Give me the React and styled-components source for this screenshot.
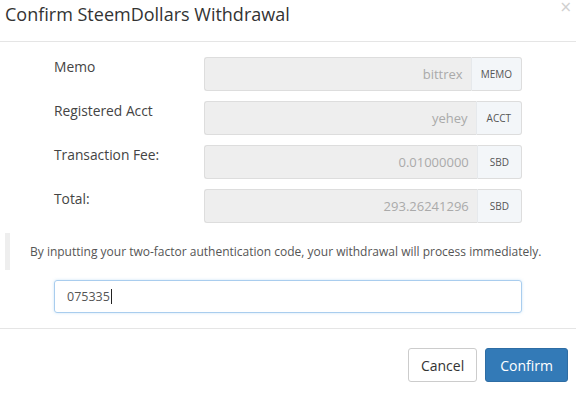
import React from "react";
import styled, { createGlobalStyle } from "styled-components";

const Global = createGlobalStyle`
  html, body { margin: 0; padding: 0; background: #fff; }
  body { font-family: "Open Sans", "Liberation Sans", sans-serif; color: #444; }
  * { box-sizing: border-box; }
`;

const Modal = styled.div`
  width: 576px;
  height: 393px;
  display: flex;
  flex-direction: column;
  overflow: hidden;
`;

const Header = styled.div`
  height: 42px;
  border-bottom: 1px solid #e5e5e5;
  display: flex;
  align-items: flex-start;
  justify-content: space-between;
  padding: 0 4px 0 5px;
`;

const Title = styled.h4`
  margin: 0;
  margin-top: 1px;
  font-size: 18px;
  font-weight: 400;
  color: #333;
  line-height: 26px;
`;

const Close = styled.span`
  font-size: 15px;
  line-height: 14px;
  color: #d0d0d0;
  font-family: "DejaVu Sans", sans-serif;
`;

const Body = styled.div`
  padding: 15px 0 15px 0;
  display: flex;
  flex-direction: column;
  border-bottom: 1px solid #e5e5e5;
`;

const Rows = styled.div`
  display: flex;
  flex-direction: column;
  gap: 10px;
  padding-left: 54px;
`;

const Row = styled.div`
  display: flex;
  align-items: flex-start;
`;

const Label = styled.label`
  width: 150px;
  font-size: 13.8px;
  line-height: 18px;
  padding-top: 1px;
  color: #444;
`;

const Group = styled.div`
  display: flex;
  width: 318px;
  height: 34px;
`;

const Field = styled.div`
  flex: 1;
  background: #eee;
  border: 1px solid #ddd;
  border-right: none;
  border-radius: 3px 0 0 3px;
  font-size: 13px;
  color: #aaa;
  display: flex;
  align-items: center;
  justify-content: flex-end;
  padding: 0 8px;
`;

const Addon = styled.span`
  background: #f3f6f9;
  border: 1px solid #ddd;
  border-left: 1px solid #e6e9ec;
  border-radius: 0 3px 3px 0;
  font-size: 10px;
  color: #555;
  display: flex;
  align-items: center;
  padding: 0 ${(p) => p.$pad}px;
`;

const Quote = styled.blockquote`
  margin: 10px 0 0 5px;
  border-left: 5px solid #eee;
  height: 37px;
  padding-left: 20px;
  font-size: 12px;
  color: #555;
  display: flex;
  align-items: center;
`;

const CodeWrap = styled.div`
  padding: 10px 54px 0 54px;
`;

const CodeInput = styled.div`
  width: 468px;
  height: 33px;
  border: 1px solid #a9cdee;
  border-radius: 3px;
  box-shadow: 0 0 3px rgba(102, 175, 233, 0.35);
  display: flex;
  align-items: center;
  padding-left: 12px;
  font-size: 12.5px;
  color: #555;
`;

const Caret = styled.span`
  display: inline-block;
  width: 1px;
  height: 15px;
  background: #222;
  margin-left: 1px;
`;

const Footer = styled.div`
  display: flex;
  justify-content: flex-end;
  gap: 8px;
  padding: 19px 8px 0 0;
`;

const Button = styled.button`
  height: 34px;
  padding: 0 ${(p) => (p.$primary ? 14 : 12)}px;
  font-family: "Open Sans", "Liberation Sans", sans-serif;
  font-size: 14px;
  border-radius: 3px;
  border: 1px solid ${(p) => (p.$primary ? "#2e6da4" : "#ccc")};
  background: ${(p) => (p.$primary ? "#337ab7" : "#fff")};
  color: ${(p) => (p.$primary ? "#fff" : "#333")};
`;

const rows = [
  { label: "Memo", value: "bittrex", addon: "MEMO", pad: 9 },
  { label: "Registered Acct", value: "yehey", addon: "ACCT", pad: 10 },
  { label: "Transaction Fee:", value: "0.01000000", addon: "SBD", pad: 12 },
  { label: "Total:", value: "293.26241296", addon: "SBD", pad: 12 },
];

export default function App() {
  return (
    <>
      <Global />
      <Modal>
        <Header>
          <Title>Confirm SteemDollars Withdrawal</Title>
          <Close>×</Close>
        </Header>
        <Body>
          <Rows>
            {rows.map((r) => (
              <Row key={r.label}>
                <Label>{r.label}</Label>
                <Group>
                  <Field>{r.value}</Field>
                  <Addon $pad={r.pad}>{r.addon}</Addon>
                </Group>
              </Row>
            ))}
          </Rows>
          <Quote>
            By inputting your two-factor authentication code, your withdrawal will process immediately.
          </Quote>
          <CodeWrap>
            <CodeInput>
              075335
              <Caret />
            </CodeInput>
          </CodeWrap>
        </Body>
        <Footer>
          <Button>Cancel</Button>
          <Button $primary>Confirm</Button>
        </Footer>
      </Modal>
    </>
  );
}
